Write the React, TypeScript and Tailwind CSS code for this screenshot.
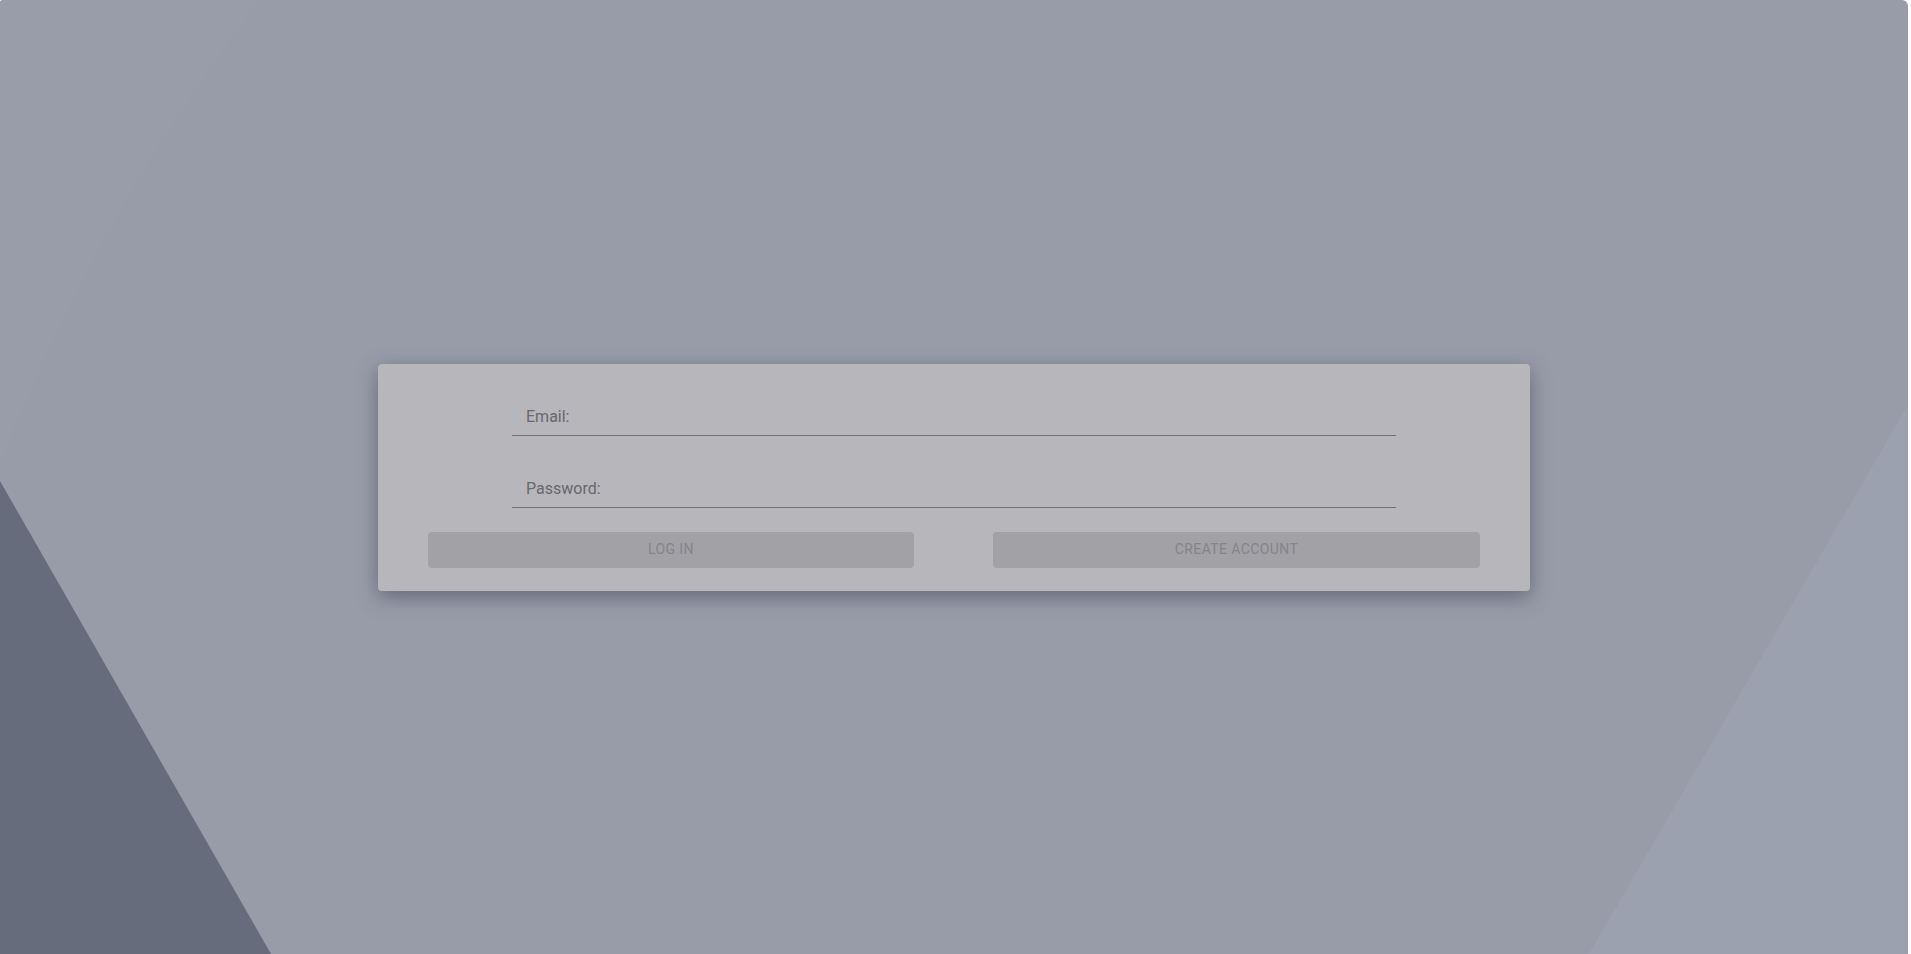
import React from 'react';

const Field: React.FC<{ label: string; type?: string }> = ({ label, type = 'text' }) => (
  <label className="flex h-12 w-[884px] items-end border-b border-[#706f75] pb-[9px] pl-[14px]">
    <span className="text-base leading-[19px] text-[#68676c]">{label}</span>
    <input type={type} className="ml-1 flex-1 bg-transparent text-base leading-[19px] text-[#3f3e43] outline-none" />
  </label>
);

export default function App() {
  return (
    <div className="h-screen w-full overflow-hidden bg-white" style={{ fontFamily: 'Roboto, "Noto Sans", sans-serif' }}>
      <div className="relative flex h-[954px] w-[1908px] items-center justify-center overflow-hidden rounded-tl-[3px] rounded-tr-[6px] bg-[#989ca9]">
        {/* background shapes */}
        <svg className="absolute inset-0 h-full w-full" viewBox="0 0 1908 954" preserveAspectRatio="none">
          <path d="M0 0 L260 0 Q110 190 0 462 Z" fill="#999daa" />
          <polygon points="0,481 0,954 271,954" fill="#666c7c" />
          <polygon points="1908,405 1908,954 1589,954" fill="#9ca1b0" />
        </svg>

        <div className="relative z-10 flex w-[1152px] flex-col items-center rounded-[4px] bg-[#b7b6bb] px-[50px] pb-[23px] pt-6 shadow-[0_6px_20px_rgba(60,64,80,0.55)]">
          <Field label="Email:" />
          <div className="mt-6">
            <Field label="Password:" type="password" />
          </div>
          <div className="mt-6 flex w-full justify-between">
            <button className="h-9 w-[486px] rounded-[4px] bg-[#a2a1a6] text-[14px] uppercase tracking-[0.4px] text-[#858489]">
              Log in
            </button>
            <button className="h-9 w-[487px] rounded-[4px] bg-[#a2a1a6] text-[14px] uppercase tracking-[0.4px] text-[#858489]">
              Create account
            </button>
          </div>
        </div>
      </div>
    </div>
  );
}
